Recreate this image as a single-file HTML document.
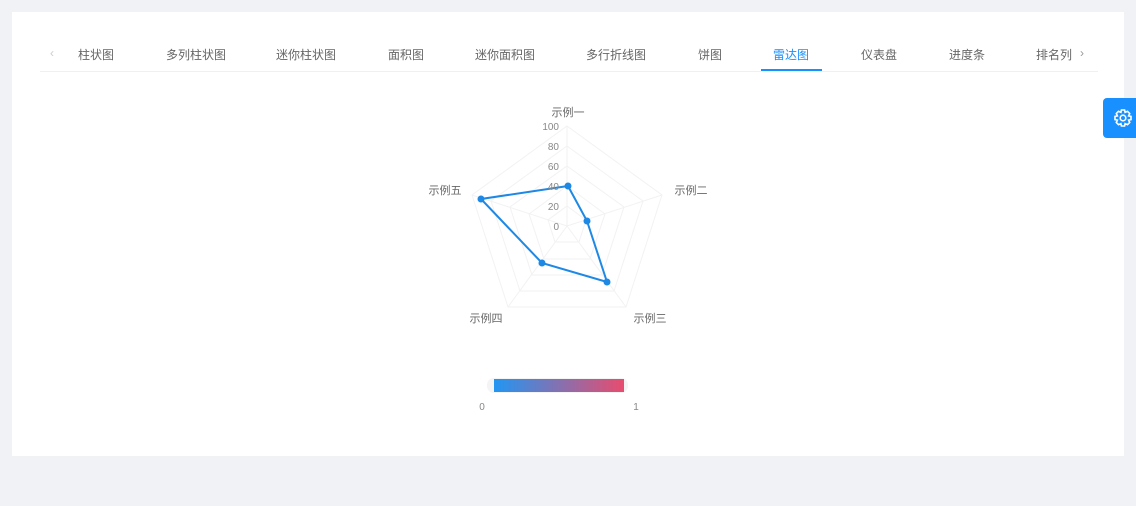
<!DOCTYPE html>
<html><head><meta charset="utf-8"><style>
body{margin:0;width:1136px;height:506px;background:#f0f2f5;position:relative;overflow:hidden;font-family:"Liberation Sans","Noto Sans CJK SC",sans-serif;}
.card{position:absolute;left:12px;top:12px;width:1112px;height:444px;background:#fff;}
.tab{position:absolute;top:46px;font-size:12px;color:#666;transform:translateX(-50%);white-space:nowrap}
.line{position:absolute;left:40px;top:71px;width:1058px;height:1px;background:#f0f0f0}
.ul{position:absolute;left:761px;top:69px;width:61px;height:2px;background:#1890ff}
.gear{position:absolute;left:1103px;top:98px;width:33px;height:40px;background:#1890ff;border-radius:4px 0 0 4px}
</style></head><body>
<div class="card"></div>
<div class="tab" style="left:52px;color:#ccc;top:46px">‹</div>
<div class="tab" style="left:96px">柱状图</div>
<div class="tab" style="left:196px">多列柱状图</div>
<div class="tab" style="left:306px">迷你柱状图</div>
<div class="tab" style="left:406px">面积图</div>
<div class="tab" style="left:505px">迷你面积图</div>
<div class="tab" style="left:616px">多行折线图</div>
<div class="tab" style="left:710px">饼图</div>
<div class="tab" style="left:791px;color:#1890ff">雷达图</div>
<div class="tab" style="left:879px">仪表盘</div>
<div class="tab" style="left:967px">进度条</div>
<div class="tab" style="left:1054px">排名列</div>
<div class="tab" style="left:1082px;color:#999">›</div>
<div class="line"></div><div class="ul"></div>
<div class="gear"><svg width="33" height="40" viewBox="0 0 33 40"><g transform="translate(20,20)" fill="none" stroke="#fff" stroke-width="1.6"><path d="M-1.6,-8 L1.6,-8 L2.1,-5.6 L4.5,-6.7 L6.7,-4.5 L5.6,-2.1 L8,-1.6 L8,1.6 L5.6,2.1 L6.7,4.5 L4.5,6.7 L2.1,5.6 L1.6,8 L-1.6,8 L-2.1,5.6 L-4.5,6.7 L-6.7,4.5 L-5.6,2.1 L-8,1.6 L-8,-1.6 L-5.6,-2.1 L-6.7,-4.5 L-4.5,-6.7 L-2.1,-5.6 Z"/><circle r="2.8"/></g></svg></div>
<svg style="position:absolute;left:0;top:0" width="1136" height="506">
<g fill="none" stroke="#f2f2f2" stroke-width="1">
<polygon points="567,126 662,195 626,307 508,307 472,195"/>
<polygon points="567,146 643,201 614,291 520,291 491,201"/>
<polygon points="567,166 624,207 602,275 532,275 510,207"/>
<polygon points="567,186 605,214 590,259 544,259 529,214"/>
<polygon points="567,206 586,220 579,242 555,242 548,220"/>
<line x1="567" y1="226" x2="567" y2="126"/><line x1="567" y1="226" x2="662" y2="195"/><line x1="567" y1="226" x2="626" y2="307"/><line x1="567" y1="226" x2="508" y2="307"/><line x1="567" y1="226" x2="472" y2="195"/>
</g>
<polygon points="568,186 587,221 607,282 542,263 481,199" fill="none" stroke="#1e88e5" stroke-width="2"/>
<g fill="#1e88e5"><circle cx="568" cy="186" r="3.5"/><circle cx="587" cy="221" r="3.5"/><circle cx="607" cy="282" r="3.5"/><circle cx="542" cy="263" r="3.5"/><circle cx="481" cy="199" r="3.5"/></g>
<g font-size="10" fill="#888" text-anchor="end"><text x="559" y="130">100</text><text x="559" y="150">80</text><text x="559" y="170">60</text><text x="559" y="190">40</text><text x="559" y="210">20</text><text x="559" y="230">0</text></g>
<g font-size="11" fill="#666" text-anchor="middle"><text x="568" y="116">示例一</text><text x="691" y="194">示例二</text><text x="650" y="322">示例三</text><text x="486" y="322">示例四</text><text x="445" y="194">示例五</text></g>
<defs><linearGradient id="g"><stop offset="0" stop-color="#2196f3"/><stop offset="1" stop-color="#e84c6e"/></linearGradient></defs>
<rect x="487" y="378" width="141" height="15" rx="7" fill="#f4f4f4"/>
<rect x="494" y="379" width="130" height="13" fill="url(#g)"/>
<g font-size="10" fill="#888" text-anchor="middle"><text x="482" y="410">0</text><text x="636" y="410">1</text></g>
</svg>
</body></html>
